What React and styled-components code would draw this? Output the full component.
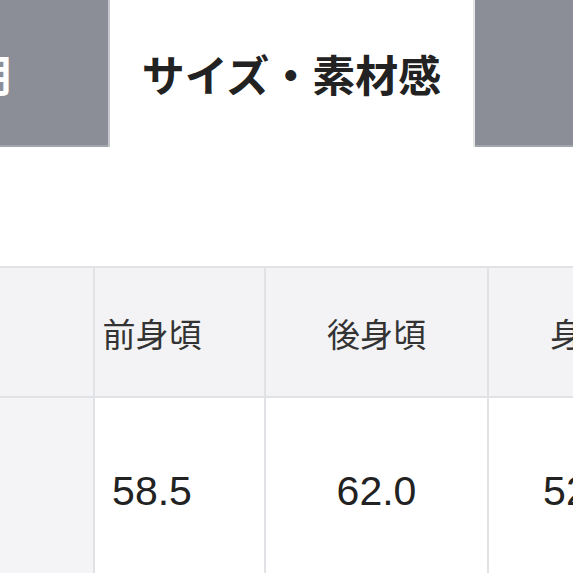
import React from "react";
import styled, { createGlobalStyle } from "styled-components";

const tabs = [
  { label: "商品説明", width: 370 },
  { label: "サイズ・素材感", width: 357, active: true },
  { label: "レビュー", width: 420 },
];

const columns = [
  { key: "label", title: "", width: 95, pad: 0 },
  { key: "front", title: "前身頃", width: 171, pad: 55 },
  { key: "back", title: "後身頃", width: 223, pad: 0 },
  { key: "width", title: "身幅", width: 190, pad: 0 },
];

const rows = [{ label: "", front: "58.5", back: "62.0", width: "52.0" }];

function App() {
  return (
    <Page>
      <GlobalStyle />
      <TabBar>
        {tabs.map((tab) => (
          <Tab key={tab.label} $active={tab.active} $width={tab.width}>
            {tab.label}
          </Tab>
        ))}
      </TabBar>

      <SizeTable>
        <colgroup>
          {columns.map((c) => (
            <col key={c.key} style={{ width: c.width }} />
          ))}
        </colgroup>
        <thead>
          <tr>
            {columns.map((c) => (
              <HeadCell key={c.key} $pad={c.pad}>
                {c.title}
              </HeadCell>
            ))}
          </tr>
        </thead>
        <tbody>
          {rows.map((row, i) => (
            <tr key={i}>
              {columns.map((c) =>
                c.key === "label" ? (
                  <LabelCell key={c.key}>{row[c.key]}</LabelCell>
                ) : (
                  <ValueCell key={c.key} $pad={c.pad}>
                    {row[c.key]}
                  </ValueCell>
                )
              )}
            </tr>
          ))}
        </tbody>
      </SizeTable>
    </Page>
  );
}

const GlobalStyle = createGlobalStyle`
  html, body {
    margin: 0;
    padding: 0;
    background: #fff;
    overflow: hidden;
  }
  body {
    font-family: "Noto Sans CJK JP", "Noto Sans", sans-serif;
  }
`;

const Page = styled.div`
  width: 573px;
  height: 573px;
  overflow: hidden;
  background: #fff;
`;

const TabBar = styled.div`
  display: flex;
  gap: 3px;
  height: 147px;
  margin-left: -260px;
  margin-bottom: 119px;
`;

const Tab = styled.div`
  flex: 0 0 ${(p) => p.$width}px;
  display: flex;
  align-items: center;
  justify-content: center;
  box-sizing: border-box;
  font-family: "Noto Sans CJK JP", sans-serif;
  font-size: 43px;
  font-weight: 700;
  padding-bottom: 2px;
  color: ${(p) => (p.$active ? "#222" : "#fff")};
  background: ${(p) => (p.$active ? "#fff" : "#8b8d97")};
  box-shadow: ${(p) =>
    p.$active
      ? "none"
      : "inset -2px 0 0 #c7c8cd, inset 2px 0 0 #e4e5e8, inset 0 -2px 0 #a3a5ad"};
`;

const SizeTable = styled.table`
  border-collapse: collapse;
  table-layout: fixed;
  margin-left: -2px;
  width: 679px;
  color: #333;
`;

const Cell = styled.td`
  border: 2px solid #e1e2e5;
  text-align: center;
  padding: 0 ${(p) => p.$pad || 0}px 0 0;
`;

const HeadCell = styled(Cell).attrs({ as: "th" })`
  height: 126px;
  background: #f3f3f5;
  font-family: "Noto Sans CJK JP", sans-serif;
  font-size: 33px;
  font-weight: 400;
  color: #333;
  padding-top: 2px;
`;

const LabelCell = styled(Cell)`
  height: 200px;
  background: #f4f4f6;
`;

const ValueCell = styled(Cell)`
  height: 200px;
  background: #fff;
  font-family: "Liberation Sans", Arial, sans-serif;
  font-size: 41px;
  color: #222;
  vertical-align: top;
  padding-top: 70px;
`;

export default App;
